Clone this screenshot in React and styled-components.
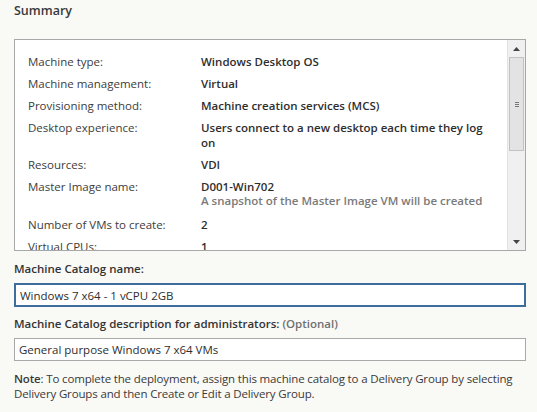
import React from "react";
import styled, { createGlobalStyle } from "styled-components";

const GlobalStyle = createGlobalStyle`
  body {
    margin: 0;
    background: #f9f9f6;
    font-family: "Open Sans", "Noto Sans", sans-serif;
    color: #333;
  }
`;

const rows = [
  { label: "Machine type:", value: "Windows Desktop OS" },
  { label: "Machine management:", value: "Virtual" },
  { label: "Provisioning method:", value: "Machine creation services (MCS)" },
  {
    label: "Desktop experience:",
    value: "Users connect to a new desktop each time they log on",
  },
  { label: "Resources:", value: "VDI" },
  {
    label: "Master Image name:",
    value: "D001-Win702",
    note: "A snapshot of the Master Image VM will be created",
  },
  { label: "Number of VMs to create:", value: "2" },
  { label: "Virtual CPUs:", value: "1" },
];

function App() {
  return (
    <Page>
      <GlobalStyle />
      <Title>Summary</Title>
      <SummaryBox>
        <SummaryList>
          {rows.map((r) => (
            <Row key={r.label} $spaced={!!r.note}>
              <Label>{r.label}</Label>
              <Value>
                {r.value}
                {r.note && <SubNote>{r.note}</SubNote>}
              </Value>
            </Row>
          ))}
        </SummaryList>
        <Scrollbar>
          <ArrowBtn>
            <svg width="7" height="4" viewBox="0 0 7 4">
              <path d="M0 4 L3.5 0 L7 4 Z" fill="#444" />
            </svg>
          </ArrowBtn>
          <Track>
            <Thumb>
              <Grip>
                <span />
                <span />
                <span />
              </Grip>
            </Thumb>
          </Track>
          <ArrowBtn>
            <svg width="7" height="4" viewBox="0 0 7 4">
              <path d="M0 0 L7 0 L3.5 4 Z" fill="#444" />
            </svg>
          </ArrowBtn>
        </Scrollbar>
      </SummaryBox>

      <FieldLabel $top={10}>Machine Catalog name:</FieldLabel>
      <TextInput $focused defaultValue="Windows 7 x64 - 1 vCPU 2GB" />

      <FieldLabel $top={9}>
        Machine Catalog description for administrators:{" "}
        <Optional>(Optional)</Optional>
      </FieldLabel>
      <TextInput defaultValue="General purpose Windows 7 x64 VMs" />

      <Note>
        <strong>Note</strong>: To complete the deployment, assign this machine
        catalog to a Delivery Group by selecting Delivery Groups and then
        Create or Edit a Delivery Group.
      </Note>
    </Page>
  );
}

const Page = styled.div`
  width: 537px;
  height: 412px;
  box-sizing: border-box;
  padding: 3px 11px 0 14px;
  overflow: hidden;
`;

const Title = styled.div`
  font-size: 12.5px;
  font-weight: 600;
  color: #3a3a3a;
  line-height: 16px;
`;

const SummaryBox = styled.div`
  margin-top: 20px;
  height: 212px;
  box-sizing: border-box;
  border: 1px solid #a8a8a8;
  background: #fff;
  display: flex;
`;

const SummaryList = styled.div`
  flex: 1;
  overflow: hidden;
  padding: 14px 0 0 13px;
  display: flex;
  flex-direction: column;
  gap: 7px;
`;

const Row = styled.div`
  display: grid;
  grid-template-columns: 173px 1fr;
  font-size: 11.5px;
  line-height: 15px;
  margin-bottom: ${(p) => (p.$spaced ? "2px" : "0")};
`;

const Label = styled.div`
  color: #3c3c3c;
`;

const Value = styled.div`
  font-weight: 600;
  color: #2e2e2e;
  padding-right: 14px;
`;

const SubNote = styled.div`
  font-weight: 600;
  color: #7a7a7a;
  line-height: 14px;
`;

const Scrollbar = styled.div`
  width: 17px;
  border-left: 1px solid #e2e2e2;
  background: #f0f0f0;
  display: flex;
  flex-direction: column;
`;

const ArrowBtn = styled.div`
  height: 17px;
  display: flex;
  align-items: center;
  justify-content: center;
  flex-shrink: 0;
`;

const Track = styled.div`
  flex: 1;
`;

const Thumb = styled.div`
  margin: 0 1px;
  height: 94px;
  box-sizing: border-box;
  border: 1px solid #c2c2c2;
  background: #e3e3e3;
  display: flex;
  align-items: center;
  justify-content: center;
`;

const Grip = styled.div`
  display: flex;
  flex-direction: column;
  gap: 1px;
  span {
    width: 4px;
    height: 1px;
    background: #777;
  }
`;

const FieldLabel = styled.div`
  margin-top: ${(p) => p.$top}px;
  font-size: 11.5px;
  font-weight: 600;
  line-height: 16px;
  color: #333;
`;

const Optional = styled.span`
  color: #707070;
`;

const TextInput = styled.input`
  display: block;
  margin-top: 6px;
  width: 100%;
  height: ${(p) => (p.$focused ? "24px" : "23px")};
  box-sizing: border-box;
  padding: 0 4px;
  font-family: "Open Sans", "Noto Sans", sans-serif;
  font-size: 11.5px;
  color: #2e2e2e;
  background: #fff;
  border: ${(p) => (p.$focused ? "2px solid #3d6d9c" : "1px solid #a9a9a9")};
  border-radius: 0;
  outline: none;
`;

const Note = styled.div`
  margin-top: 10px;
  font-size: 11.5px;
  line-height: 15px;
  letter-spacing: -0.15px;
  color: #3a3a3a;
  strong {
    font-weight: 600;
  }
`;

export default App;
